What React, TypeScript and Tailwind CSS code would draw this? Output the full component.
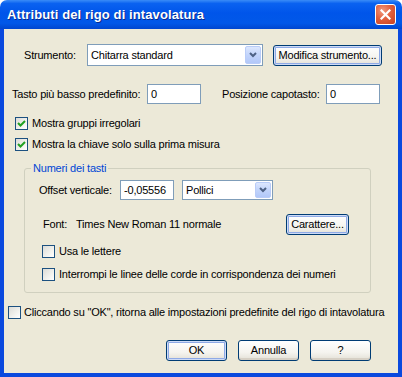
import { ReactNode } from 'react'

const font = { fontFamily: '"Liberation Sans", Arial, sans-serif' }

function XpButton({ children, w, def }: { children: ReactNode; w: string; def?: boolean }) {
  return (
    <button
      className={`${w} h-[21px] shrink-0 rounded-[3px] border border-[#003C74] bg-[linear-gradient(180deg,#FFFFFF_0%,#F5F4EF_60%,#E3E0D6_100%)] text-[11px] tracking-[-0.2px] text-black leading-none ${
        def
          ? 'shadow-[inset_0_0_0_1px_#CEDBF6,inset_0_0_0_2px_#8FAAE6]'
          : 'shadow-[inset_0_-2px_0_#D6D0C5]'
      }`}
    >
      {children}
    </button>
  )
}

function Check({ checked }: { checked?: boolean }) {
  return (
    <div className="w-[13px] h-[13px] shrink-0 border border-[#1C5180] bg-[linear-gradient(135deg,#DCDCD7_0%,#F2F2EE_60%,#FFFFFF_100%)] flex items-center justify-center">
      {checked && (
        <svg width="9" height="9" viewBox="0 0 9 9">
          <path d="M1 4 L3.5 6.5 L8 2" stroke="#21A121" strokeWidth="2" fill="none" />
        </svg>
      )}
    </div>
  )
}

function TextBox({ value, w }: { value: string; w: string }) {
  return (
    <div className={`${w} h-[20px] shrink-0 border border-[#7F9DB9] bg-white flex items-center pl-[3px] text-[11px] tracking-[-0.2px]`}>
      {value}
    </div>
  )
}

function Combo({ value, w, h }: { value: string; w: string; h: string }) {
  return (
    <div className={`${w} ${h} shrink-0 border border-[#7F9DB9] bg-white flex items-center p-[1px] text-[11px] tracking-[-0.2px]`}>
      <span className="flex-1 pl-[2px]">{value}</span>
      <div className="w-[16px] h-full rounded-[2px] border border-[#B9CCF8] bg-[linear-gradient(180deg,#DCE7FE_0%,#C2D4FB_50%,#B2C8F9_100%)] flex items-center justify-center">
        <svg width="8" height="6" viewBox="0 0 8 6">
          <path d="M1 1 L4 4 L7 1" stroke="#4D6185" strokeWidth="2" fill="none" />
        </svg>
      </div>
    </div>
  )
}

export default function App() {
  return (
    <div className="w-[402px] h-[377px] flex flex-col text-black" style={font}>
      {/* Title bar */}
      <div className="h-[29px] shrink-0 rounded-t-[7px] bg-[linear-gradient(180deg,#3A8CF7_0%,#0A62F0_12%,#0055EA_45%,#0158E8_80%,#0046CF_100%)] flex items-center pl-[7px] pr-[6px]">
        <span className="text-white font-bold text-[13px] tracking-[0.1px] [text-shadow:1px_1px_0_#0B2A8C]">
          Attributi del rigo di intavolatura
        </span>
        <div className="ml-auto w-[21px] h-[21px] rounded-[3px] border border-white bg-[radial-gradient(circle_at_35%_30%,#F19A7F_0%,#E2603E_45%,#C8401F_100%)] flex items-center justify-center">
          <svg width="11" height="11" viewBox="0 0 11 11">
            <path d="M1.5 1.5 L9.5 9.5 M9.5 1.5 L1.5 9.5" stroke="white" strokeWidth="2.2" strokeLinecap="square" />
          </svg>
        </div>
      </div>

      {/* Body */}
      <div className="flex-1 flex flex-col bg-[#ECE9D8] border-x-4 border-b-4 border-[#0A49DE] text-[11px] tracking-[-0.2px]">
        {/* Strumento */}
        <div className="mt-[15px] h-[22px] flex items-center">
          <span className="ml-[20px] w-[63px]">Strumento:</span>
          <Combo value="Chitarra standard" w="w-[176px]" h="h-[22px]" />
          <div className="ml-[10px]">
            <XpButton w="w-[109px]" def>Modifica strumento...</XpButton>
          </div>
        </div>

        {/* Tasto / capotasto */}
        <div className="mt-[18px] h-[20px] flex items-center">
          <span className="ml-[8px] w-[135px]">Tasto più basso predefinito:</span>
          <TextBox value="0" w="w-[54px]" />
          <span className="ml-[21px] w-[104px]">Posizione capotasto:</span>
          <TextBox value="0" w="w-[54px]" />
        </div>

        <div className="mt-[13px] h-[13px] flex items-center ml-[11px]">
          <Check checked />
          <span className="ml-[4px]">Mostra gruppi irregolari</span>
        </div>
        <div className="mt-[8px] h-[13px] flex items-center ml-[11px]">
          <Check checked />
          <span className="ml-[4px]">Mostra la chiave solo sulla prima misura</span>
        </div>

        {/* Group box */}
        <div className="relative mt-[17px] ml-[20px] w-[347px] h-[125px] border border-[#D0D0BF] rounded-[3px] flex flex-col">
          <span className="absolute -top-[7px] left-[6px] px-[2px] bg-[#ECE9D8] text-[#0046D5] leading-[12px]">
            Numeri dei tasti
          </span>

          <div className="mt-[11px] h-[20px] flex items-center">
            <span className="ml-[14px] w-[81px]">Offset verticale:</span>
            <TextBox value="-0,05556" w="w-[54px]" />
            <div className="ml-[8px]">
              <Combo value="Pollici" w="w-[91px]" h="h-[20px]" />
            </div>
          </div>

          <div className="mt-[14px] h-[21px] flex items-center">
            <span className="ml-[18px] w-[33px]">Font:</span>
            <span className="w-[210px]">Times New Roman 11 normale</span>
            <XpButton w="w-[63px]" def>Carattere...</XpButton>
          </div>

          <div className="mt-[10px] h-[13px] flex items-center ml-[17px]">
            <Check />
            <span className="ml-[4px]">Usa le lettere</span>
          </div>
          <div className="mt-[10px] h-[13px] flex items-center ml-[17px]">
            <Check />
            <span className="ml-[4px]">Interrompi le linee delle corde in corrispondenza dei numeri</span>
          </div>
        </div>

        <div className="mt-[13px] h-[13px] flex items-center ml-[4px]">
          <Check />
          <span className="ml-[3px]">Cliccando su "OK", ritorna alle impostazioni predefinite del rigo di intavolatura</span>
        </div>

        <div className="mt-[21px] flex justify-end gap-[11px] pr-[27px]">
          <XpButton w="w-[61px]" def>OK</XpButton>
          <XpButton w="w-[61px]">Annulla</XpButton>
          <XpButton w="w-[61px]">?</XpButton>
        </div>
      </div>
    </div>
  )
}
